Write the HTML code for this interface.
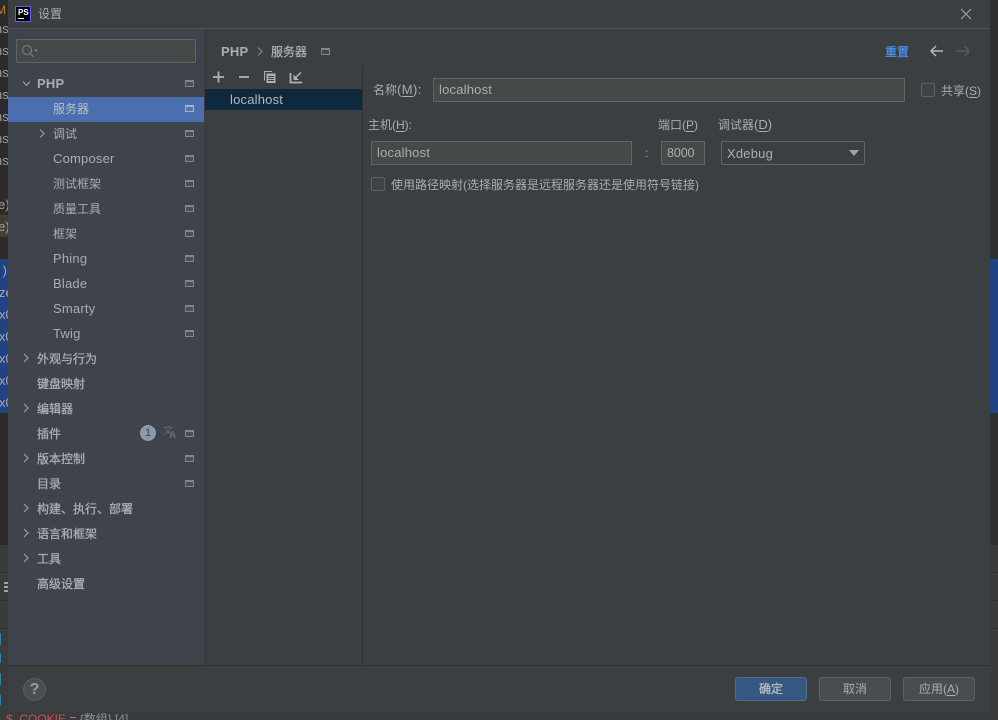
<!DOCTYPE html>
<html lang="zh"><head><meta charset="utf-8"><title>设置</title>
<style>
html,body{margin:0;padding:0;background:#3a3c3e}
#r{position:relative;width:998px;height:720px;overflow:hidden;background:#393b3d;font-family:"Liberation Sans","Noto Sans CJK SC",sans-serif;font-size:12px;color:#a9aeb1}
#r div,#r svg{position:absolute}
.t{white-space:nowrap;line-height:18px;height:18px}
.l{letter-spacing:.2px;font-size:13px}
.h{-webkit-text-stroke:.3px}
u{text-underline-offset:2px}
.b{font-weight:bold}
.m{font-size:13px}
.f{background:#45494a;border:1px solid #646464;box-sizing:border-box;color:#a9aeb1;line-height:22px;white-space:nowrap}
.c{width:12px;height:12px;border:1px solid #5e6060;border-radius:2px;background:#3f4244}
.ic{width:7px;height:4px;border:1px solid #80868d;border-top-width:2px;background:#4b5058;left:185px}
.btn{top:677px;height:24px;box-sizing:border-box;border:1px solid #5e6060;border-radius:3px;background:#4a4d4f;text-align:center;line-height:22px;width:72px}
.code{overflow:hidden;left:0;width:8px}
.code div{white-space:pre;font-size:13px;line-height:22px}
</style></head><body><div id="r">
<div style="left:0;top:0;width:8px;height:545px;background:#2b2b2b"></div>
<div style="left:0;top:215px;width:8px;height:22px;background:#3f3f34"></div>
<div style="left:0;top:259px;width:8px;height:154px;background:#214283"></div>
<div style="left:0;top:572px;width:8px;height:1px;background:#2e3032"></div>
<div style="left:0;top:600px;width:8px;height:1px;background:#2e3032"></div>
<div style="left:0;top:628px;width:8px;height:1px;background:#2e3032"></div>
<div style="left:4px;top:582px;width:4px;height:2px;background:#a0a3a5"></div>
<div style="left:4px;top:586px;width:4px;height:2px;background:#a0a3a5"></div>
<div style="left:4px;top:590px;width:4px;height:2px;background:#a0a3a5"></div>
<div style="left:0;top:633px;width:1px;height:12px;background:#2a87a8"></div>
<div style="left:0;top:653px;width:1px;height:10px;background:#2a87a8"></div>
<div style="left:0;top:673px;width:1px;height:12px;background:#2a87a8"></div>
<div style="left:0;top:695px;width:1px;height:10px;background:#2a87a8"></div>
<div style="left:990px;top:0;width:8px;height:545px;background:#2e2f31"></div>
<div style="left:990px;top:259px;width:8px;height:154px;background:#214283"></div>
<div style="left:990px;top:572px;width:8px;height:1px;background:#2e3032"></div>
<div style="left:990px;top:600px;width:8px;height:1px;background:#2e3032"></div>
<div style="left:990px;top:628px;width:8px;height:1px;background:#2e3032"></div>
<div class="code" style="top:0;height:20px"><div style="left:-4px;top:2px;color:#c57a2a;font-size:12px;line-height:16px">M</div></div>
<div class="code" style="top:18px;height:154px"><div style="left:-5px;top:0;color:#9a9d9f">ns
ns
ns
ns
ns
ns
ns</div></div>
<div class="code" style="top:193px;height:44px"><div style="left:-2px;top:1px;color:#a9a08a">e)
e)</div></div>
<div class="code" style="top:259px;height:154px"><div style="left:-1px;top:1px;color:#a4a8b0"> )
ze
x0
x0
x0
x0
x0</div></div>
<div class="t" style="left:6px;top:711px;color:#c75450;font-size:12px;line-height:16px">$_COOKIE <span style="color:#8f9396;font-size:12px">= {数组} [4]</span></div>

<div style="left:8px;top:0;width:982px;height:712px;background:#3c3f41"></div>
<div style="left:8px;top:28px;width:982px;height:1px;background:#515151"></div>
<svg style="left:15px;top:6px" width="16" height="16" viewBox="0 0 16 16"><rect x=".5" y=".5" width="15" height="15" fill="#000" stroke="#6b57ff"/><rect x="3" y="12" width="6" height="1" fill="#fff"/></svg>
<div class="t b" style="left:18px;top:8px;font-size:8px;line-height:9px;height:9px;color:#fff">PS</div>
<div class="t" style="left:38px;top:5px;color:#a9aeb1">设置</div>
<svg style="left:960px;top:8px" width="12" height="12" viewBox="0 0 12 12"><path d="M1 1L11 11M11 1L1 11" stroke="#a5a8aa" stroke-width="1" fill="none"/></svg>

<div style="left:8px;top:29px;width:196px;height:636px;background:#3e434c"></div>
<div style="left:16px;top:39px;width:180px;height:24px;box-sizing:border-box;border:1px solid #646464;border-radius:2px;background:#45494a"></div>
<svg style="left:21px;top:44px" width="20" height="14" viewBox="0 0 20 14"><circle cx="6" cy="6" r="4.5" fill="none" stroke="#7f8487" stroke-width="1"/><path d="M9 9.500L13 13" stroke="#7f8487"/><path d="M13 5.500h4l-2 2.500z" fill="#7f8487"/></svg>
<div style="left:8px;top:97px;width:196px;height:25px;background:#4b6eaf"></div>

<svg style="left:0;top:0" width="205" height="600" viewBox="0 0 205 600" fill="none" stroke="#9a9ea2" stroke-width="1.200">
<path d="M23 81.500L26.500 85.500L30 81.500"/>
<path d="M40 129.500L44 133.500L40 137.500"/>
<path d="M24 354L28 358L24 362"/><path d="M24 404L28 408L24 412"/><path d="M24 454L28 458L24 462"/><path d="M24 504L28 508L24 512"/><path d="M24 529L28 533L24 537"/><path d="M24 554L28 558L24 562"/>
</svg>

<div class="t b l" style="left:37px;top:75px">PHP</div>
<div class="t" style="left:53px;top:100px;color:#bbbfc4">服务器</div>
<div class="t" style="left:53px;top:125px">调试</div>
<div class="t l" style="left:53px;top:150px">Composer</div>
<div class="t" style="left:53px;top:175px">测试框架</div>
<div class="t" style="left:53px;top:200px">质量工具</div>
<div class="t" style="left:53px;top:225px">框架</div>
<div class="t l" style="left:53px;top:250px">Phing</div>
<div class="t l" style="left:53px;top:275px">Blade</div>
<div class="t l" style="left:53px;top:300px">Smarty</div>
<div class="t l" style="left:53px;top:325px">Twig</div>
<div class="t h" style="left:37px;top:350px">外观与行为</div>
<div class="t h" style="left:37px;top:375px">键盘映射</div>
<div class="t h" style="left:37px;top:400px">编辑器</div>
<div class="t h" style="left:37px;top:425px">插件</div>
<div class="t h" style="left:37px;top:450px">版本控制</div>
<div class="t h" style="left:37px;top:475px">目录</div>
<div class="t h" style="left:37px;top:500px">构建、执行、部署</div>
<div class="t h" style="left:37px;top:525px">语言和框架</div>
<div class="t h" style="left:37px;top:550px">工具</div>
<div class="t h" style="left:37px;top:575px">高级设置</div>

<div class="ic" style="top:80px"></div><div class="ic" style="top:105px;border-color:#a6b4cf;background:#5676b0"></div><div class="ic" style="top:130px"></div><div class="ic" style="top:155px"></div><div class="ic" style="top:180px"></div><div class="ic" style="top:205px"></div><div class="ic" style="top:230px"></div><div class="ic" style="top:255px"></div><div class="ic" style="top:280px"></div><div class="ic" style="top:305px"></div><div class="ic" style="top:330px"></div><div class="ic" style="top:430px"></div><div class="ic" style="top:455px"></div><div class="ic" style="top:480px"></div>
<div style="left:140px;top:425px;width:16px;height:16px;border-radius:50%;background:#8a9aa8;color:#3e434c;text-align:center;line-height:16px;font-size:11px">1</div>
<div class="t" style="left:163px;top:423px;font-size:10px;color:#666b72">文</div>
<div class="t b" style="left:169px;top:427px;font-size:10px;color:#666b72">A</div>

<div style="left:204px;top:29px;width:1px;height:636px;background:#393b3d"></div>
<div class="t b l" style="left:221px;top:43px">PHP</div>
<svg style="left:257px;top:47px" width="6" height="9" viewBox="0 0 6 9"><path d="M1 .5L5 4.500L1 8.500" fill="none" stroke="#8b8e90" stroke-width="1"/></svg>
<div class="t h" style="left:271px;top:43px">服务器</div>
<div class="ic" style="left:321px;top:48px;background:#44484a"></div>
<div class="t h" style="left:885px;top:43px;color:#4a94f0;-webkit-text-stroke:.2px">重置</div>
<svg style="left:929px;top:44px" width="40" height="14" viewBox="0 0 40 14" fill="none" stroke-width="1.500"><path d="M14 7H2M7 2L2 7L7 12" stroke="#b4b7b9"/><path d="M28 7H41M36 2L41 7L36 12" stroke="#5a5d5f" transform="translate(-.5 0)"/></svg>

<svg style="left:212px;top:70px" width="95" height="14" viewBox="0 0 95 14"><path d="M1 7H12M6.500 1.500V12.500" stroke="#b0b3b5" stroke-width="1.800" fill="none"/><path d="M27 7H37" stroke="#b0b3b5" stroke-width="1.800" fill="none"/><path d="M52.500 2V10.500" stroke="#b0b3b5" stroke-width="1"/><path d="M52 1.500h8" stroke="#b0b3b5" stroke-width="1"/><rect x="54.500" y="3.500" width="9" height="9.500" fill="#b0b3b5"/><path d="M56 6.500h6M56 8.500h6M56 10.500h6" stroke="#3c3f41" stroke-width="1"/><path d="M78.500 3V12.500H90" stroke="#b0b3b5" stroke-width="1.800" fill="none"/><path d="M82 9L89 2.500" stroke="#b0b3b5" stroke-width="1.500"/><path d="M81.500 4.500V10H87z" fill="#b0b3b5"/></svg>
<div style="left:205px;top:89px;width:157px;height:21px;background:#0d293e"></div>
<div class="t l" style="left:230px;top:91px;color:#b4b8bb">localhost</div>
<div style="left:362px;top:65px;width:1px;height:600px;background:#323232"></div>

<div class="t" style="left:373px;top:81px">名称<span class="m" style="letter-spacing:.4px">(<u>M</u>):</span></div>
<div class="f l" style="left:433px;top:78px;width:472px;height:24px;padding-left:5px">localhost</div>
<div class="c" style="left:921px;top:83px"></div>
<div class="t" style="left:941px;top:82px">共享(<u>S</u>)</div>
<div class="t" style="left:368px;top:116px">主机(<u>H</u>):</div>
<div class="t" style="left:658px;top:116px">端口(<u>P</u>)</div>
<div class="t" style="left:718px;top:116px">调试器<span class="m">(<u>D</u>)</span></div>
<div class="f l" style="left:371px;top:141px;width:261px;height:24px;padding-left:5px">localhost</div>
<div class="t" style="left:645px;top:144px">:</div>
<div class="f l" style="left:661px;top:141px;width:44px;height:24px;padding-left:5px;letter-spacing:-.1px;font-size:12.5px">8000</div>
<div style="left:721px;top:141px;width:144px;height:24px;box-sizing:border-box;border:1px solid #646464;border-radius:2px;background:#3c3f41"></div>
<div class="t l" style="left:727px;top:145px">Xdebug</div>
<svg style="left:849px;top:150px" width="10" height="6" viewBox="0 0 10 6"><path d="M0 0H10L5 6z" fill="#a0a3a5"/></svg>
<div class="c" style="left:371px;top:177px"></div>
<div class="t" style="left:391px;top:176px">使用路径映射(选择服务器是远程服务器还是使用符号链接)</div>

<div style="left:8px;top:665px;width:982px;height:1px;background:#323232"></div>
<div style="left:23px;top:678px;width:23px;height:23px;border-radius:50%;background:#4c4f51;border:1px solid #5a5d5f;box-sizing:border-box;text-align:center;line-height:21px;font-size:16px;font-weight:bold;color:#9a9d9f">?</div>
<div class="btn h" style="left:735px;background:#365880;border-color:#4c708c;color:#bbbfc4">确定</div>
<div class="btn" style="left:819px">取消</div>
<div class="btn" style="left:903px">应用(<u>A</u>)</div>
</div></body></html>
